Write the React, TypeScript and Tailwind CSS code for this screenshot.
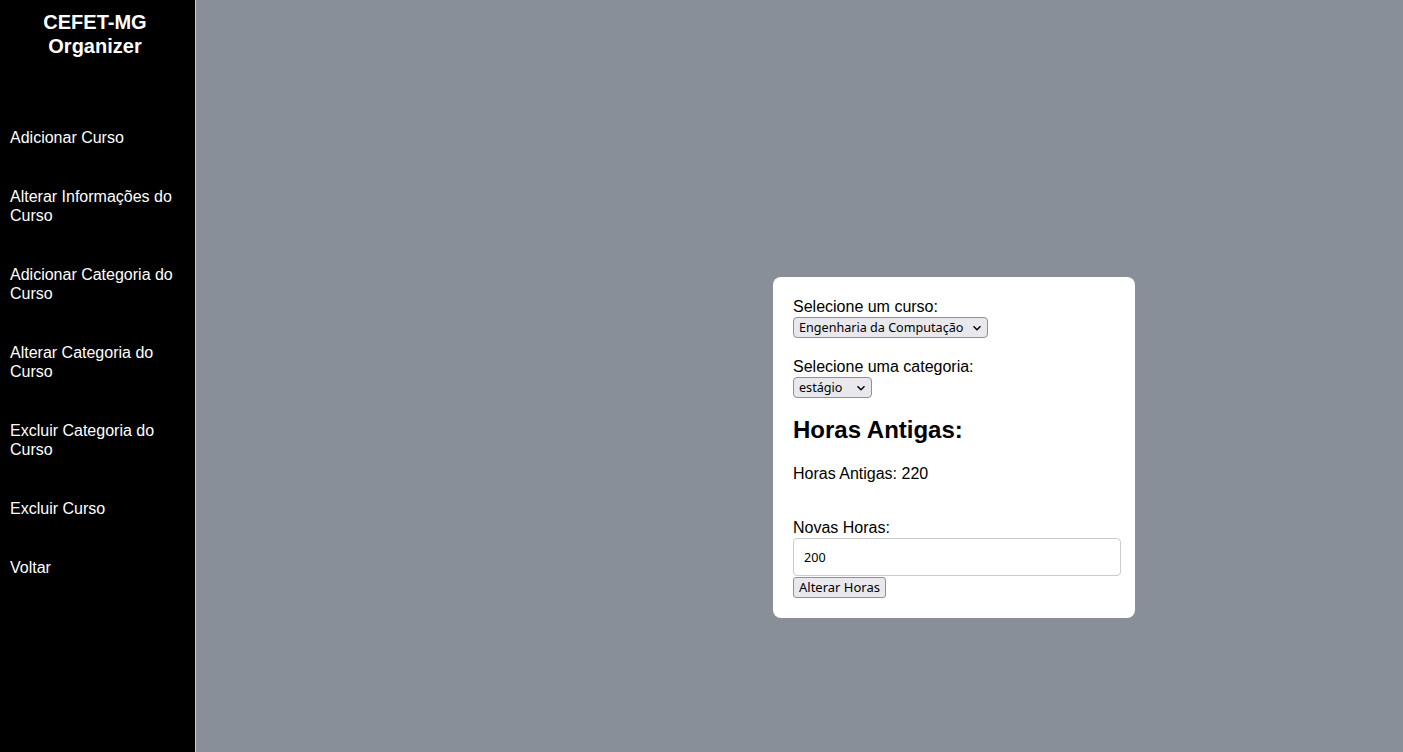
import React from "react";

const items = [
  "Adicionar Curso",
  "Alterar Informações do Curso",
  "Adicionar Categoria do Curso",
  "Alterar Categoria do Curso",
  "Excluir Categoria do Curso",
  "Excluir Curso",
  "Voltar",
];

function Chevron() {
  return (
    <svg width="10" height="10" viewBox="0 0 10 10" className="pointer-events-none absolute right-[6px] top-[6px]">
      <path d="M1.5 3.2 L5 6.7 L8.5 3.2" fill="none" stroke="#000" strokeWidth="1.4" />
    </svg>
  );
}

function FakeSelect({ value, width }: { value: string; width: number }) {
  return (
    <div className="relative h-[21px] self-start" style={{ width }}>
      <select
        className="block appearance-none h-[21px] w-full bg-[#e9e9ed] border border-[#8f8f9d] rounded-[4px] pl-[5px] text-[12.6px] leading-[19px] text-black outline-none"
        style={{ fontFamily: '"Noto Sans", "DejaVu Sans", sans-serif' }}
        defaultValue={value}
      >
        <option value={value}>{value}</option>
      </select>
      <Chevron />
    </div>
  );
}

export default function App() {
  return (
    <div
      className="relative flex h-[752px] w-[1403px] overflow-hidden bg-[#898f98]"
      style={{ fontFamily: '"Liberation Sans", Arial, sans-serif' }}
    >
      <aside className="h-full w-[195px] shrink-0 bg-black text-white">
        <div className="w-[190px] pt-[10px] text-center text-[20px] font-bold leading-[24px]">
          CEFET-MG
          <br />
          Organizer
        </div>
        <nav className="mt-[70px] flex flex-col gap-[40px] px-[10px]">
          {items.map((t) => (
            <div key={t} className="text-[16px] leading-[19px]">
              {t}
            </div>
          ))}
        </nav>
      </aside>
      <div className="h-full w-px shrink-0 bg-[#c6c8cc]" />
      <div className="flex-1" />

      <div className="absolute left-[773px] top-[277px] flex w-[362px] flex-col rounded-[8px] bg-white p-[20px] text-black">
        <label className="block text-[16px] leading-[20px]">Selecione um curso:</label>
        <FakeSelect value="Engenharia da Computação" width={195} />
        <label className="mt-[19px] block text-[16px] leading-[20px]">Selecione uma categoria:</label>
        <FakeSelect value="estágio" width={79} />
        <h2 className="mt-[18px] text-[24px] font-bold leading-[28px]">Horas Antigas:</h2>
        <p className="mt-[20px] text-[16px] leading-[20px]">Horas Antigas: 220</p>
        <label className="mt-[34px] block text-[16px] leading-[20px]">Novas Horas:</label>
        <input
          className="block h-[38px] w-[328px] rounded-[4px] border border-[#cccccc] px-[10px] text-[12.6px] text-black outline-none"
          style={{ fontFamily: '"Noto Sans", "DejaVu Sans", sans-serif' }}
          defaultValue="200"
        />
        <button
          className="mt-[1px] block h-[21px] self-start rounded-[3px] border border-[#8f8f9d] bg-[#e9e9ed] px-[5px] text-[13px] leading-[19px] text-black"
          style={{ fontFamily: '"Noto Sans", "DejaVu Sans", sans-serif' }}
        >
          Alterar Horas
        </button>
      </div>
    </div>
  );
}
